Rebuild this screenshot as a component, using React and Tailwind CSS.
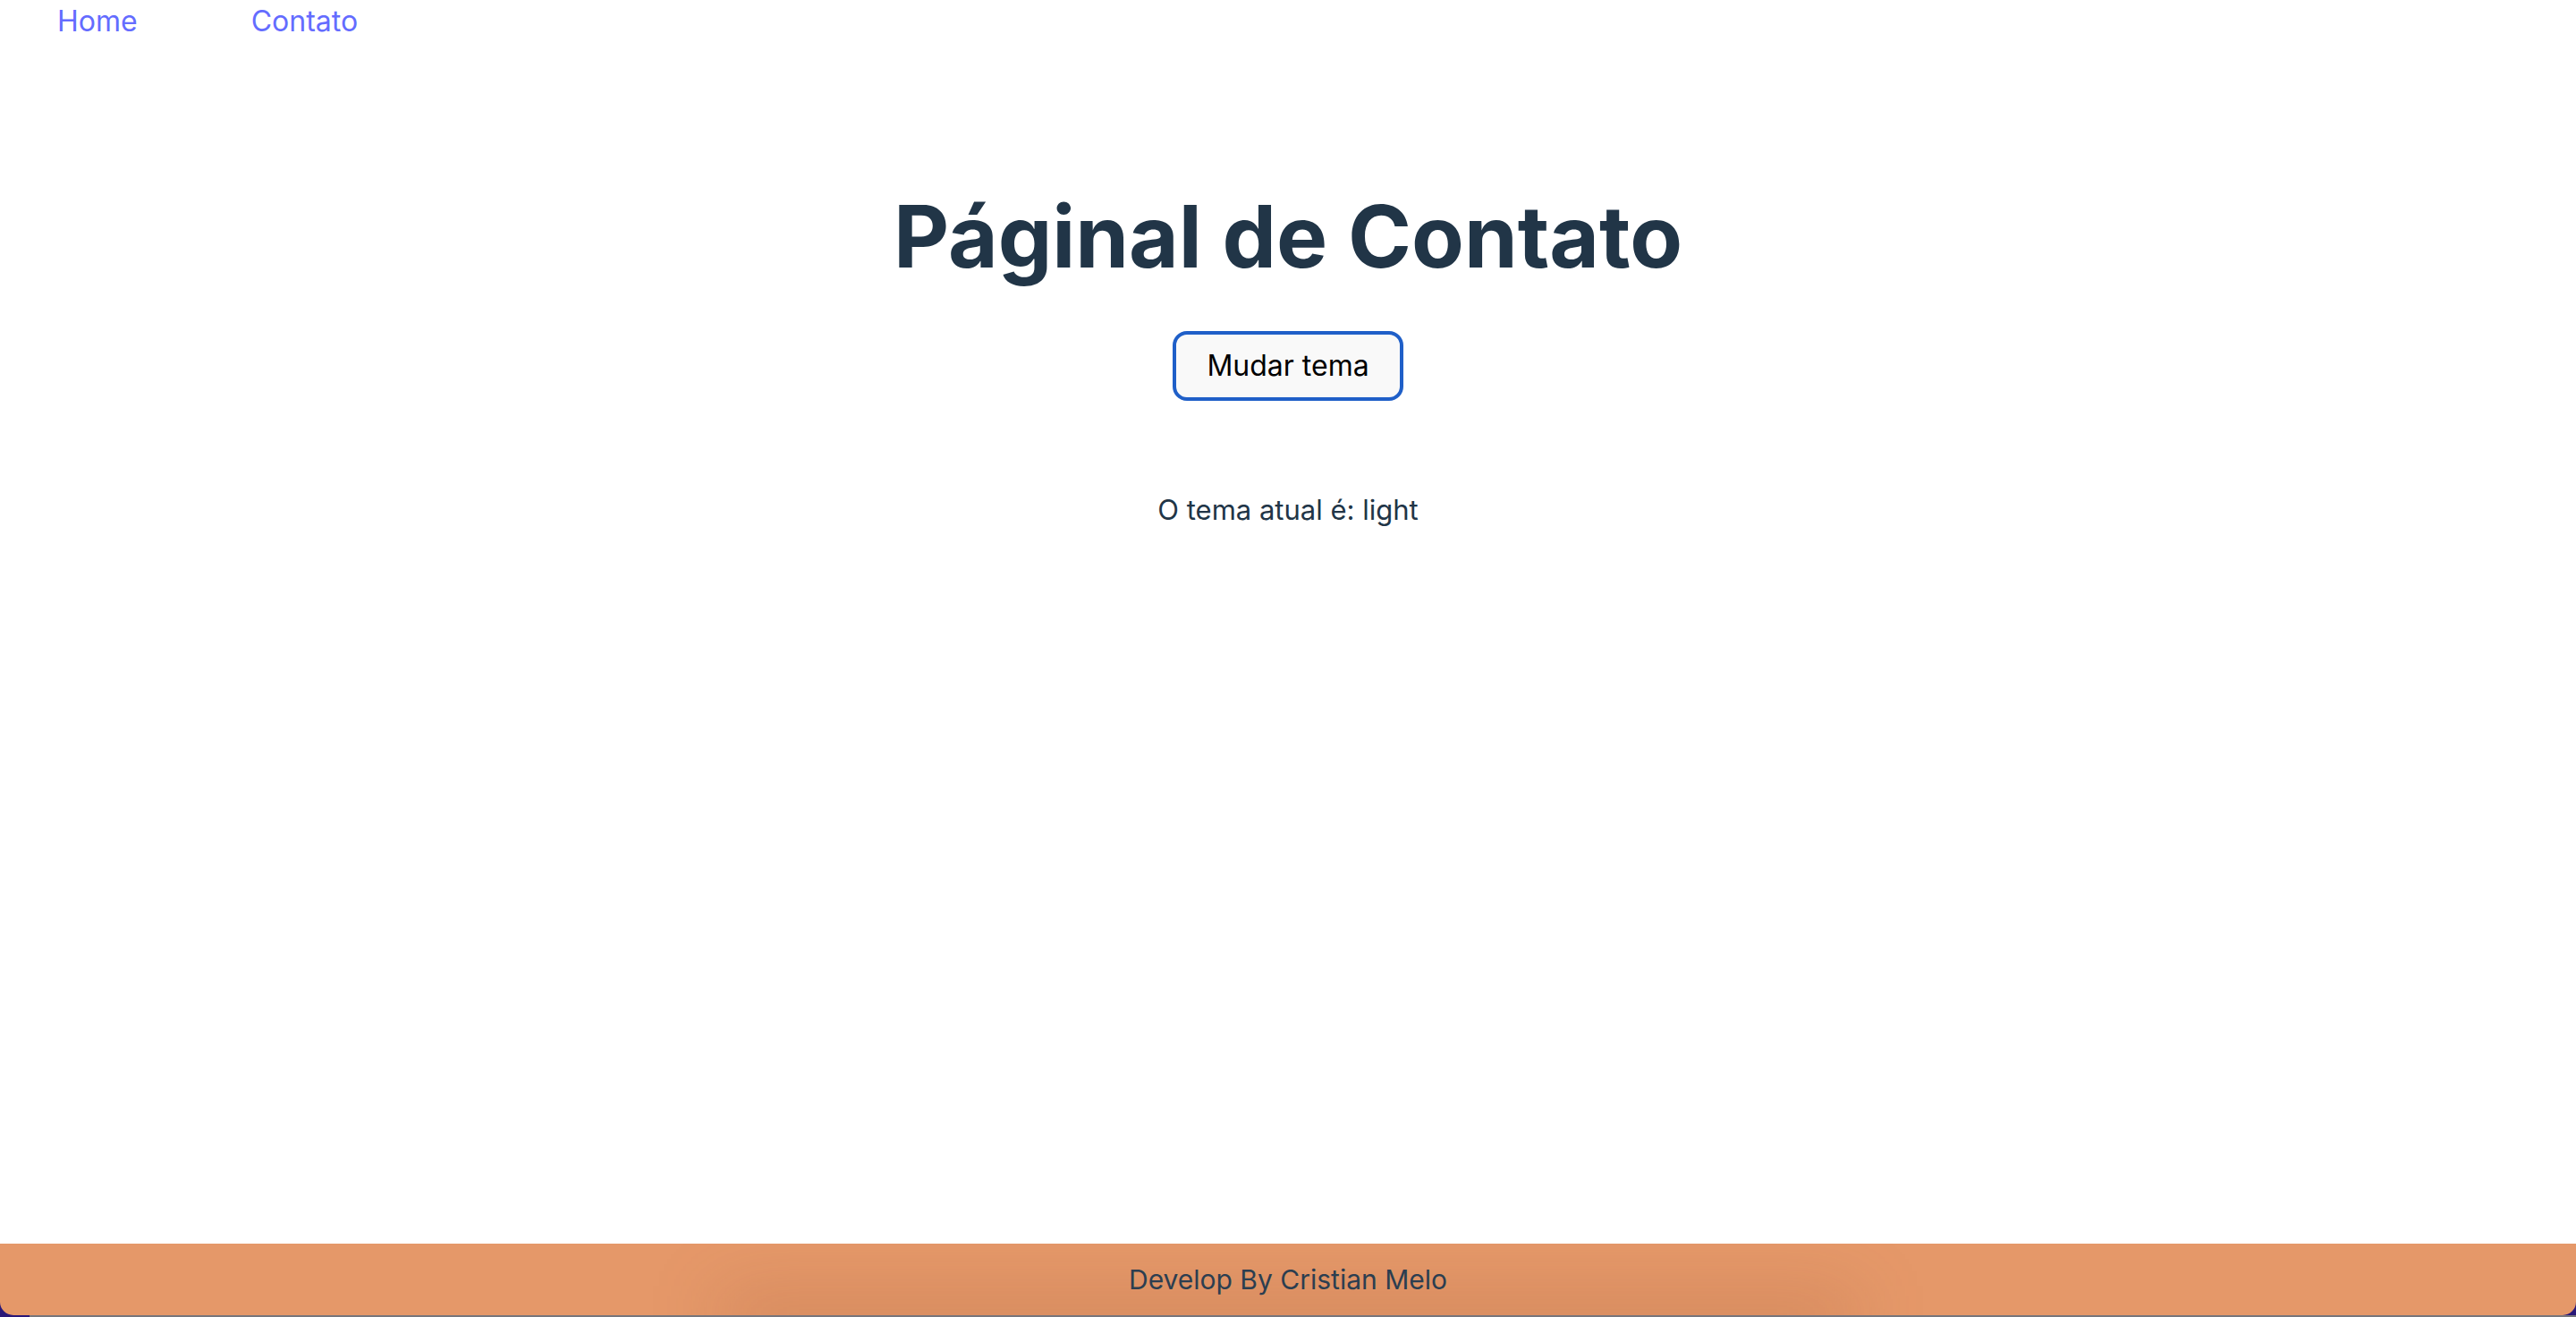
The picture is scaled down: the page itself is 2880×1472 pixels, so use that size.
import { useState } from 'react';

const App = () => {
  const [theme, setTheme] = useState('light');

  return (
    <div className="min-h-[1472px] flex flex-col bg-[#2a1878] font-['Inter','Liberation_Sans',sans-serif]">
      <div className="flex-1 bg-white flex flex-col">
        <nav className="flex items-center gap-[127px] pl-[64px] h-[48px]">
          <a href="#" className="text-[32px] leading-[48px] text-[#646cff]">
            Home
          </a>
          <a href="#" className="text-[32px] leading-[48px] text-[#646cff]">
            Contato
          </a>
        </nav>

        <main className="flex flex-col items-center text-[#213547]">
          <h1 className="mt-[164px] text-[96px] leading-[1.1] font-bold">
            Páginal de Contato
          </h1>
          <button
            onClick={() => setTheme(theme === 'light' ? 'dark' : 'light')}
            className="mt-[52px] w-[258px] h-[78px] flex items-center justify-center rounded-[16px] border-4 border-[#1f5fc8] bg-[#f9f9f9] text-[32px] text-black"
          >
            Mudar tema
          </button>
          <p className="mt-[98px] text-[31px] leading-[48px]">O tema atual é: {theme}</p>
        </main>
      </div>

      <footer className="relative h-[80px] flex items-center justify-center bg-[#e59869] rounded-b-[15px] overflow-hidden">
        <div className="absolute bottom-[-20px] left-[28%] right-[28%] h-[36px] bg-[#8a4a2a]/30 blur-2xl"></div>
        <span className="relative text-[30px] text-[#2c3e50]">Develop By Cristian Melo</span>
      </footer>
      <div className="h-[2px] ml-[33px] bg-[#77767c]"></div>
    </div>
  );
};

export default App;
